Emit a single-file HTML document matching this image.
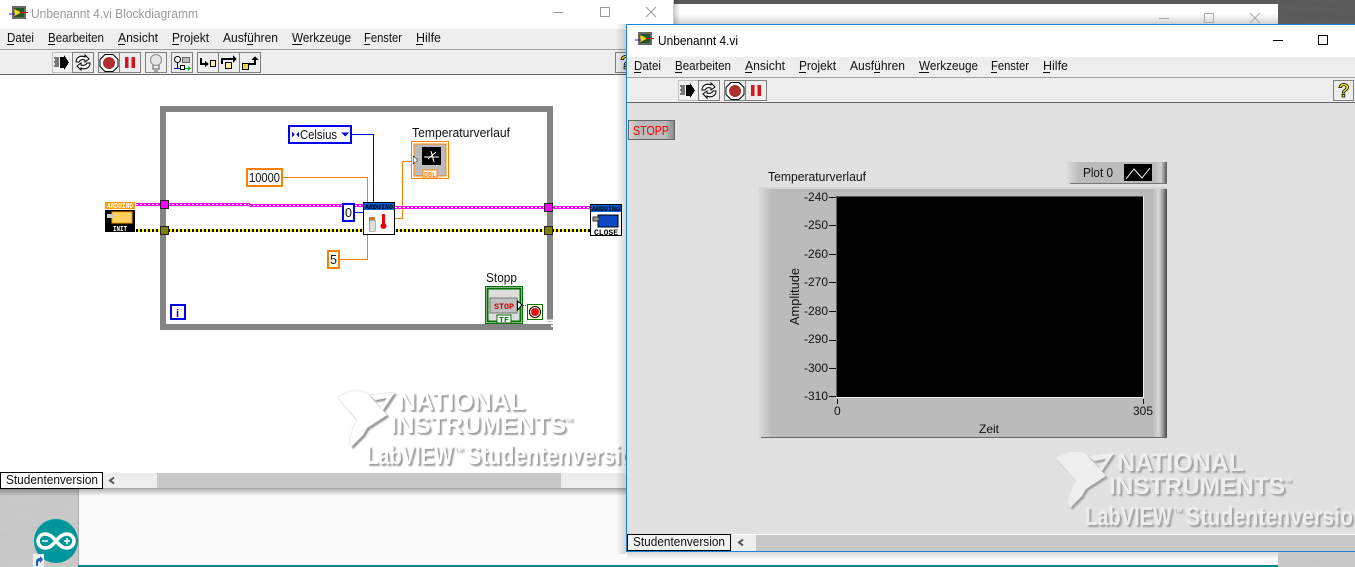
<!DOCTYPE html>
<html><head><meta charset="utf-8"><style>
html,body{margin:0;padding:0;background:#fff;overflow:hidden}
svg{display:block}
text{font-family:"Liberation Sans",sans-serif;font-size:12.5px;fill:#111}
.m{font-size:12.5px}
.wm{font-weight:bold;font-family:"Liberation Sans",sans-serif}
.px{font-family:"Liberation Mono",monospace;font-weight:bold}
</style></head><body>
<svg width="1355" height="567" viewBox="0 0 1355 567" xmlns="http://www.w3.org/2000/svg" shape-rendering="crispEdges">
<defs>
<linearGradient id="behind" x1="0" y1="0" x2="0" y2="1"><stop offset="0" stop-color="#fff"/><stop offset=".5" stop-color="#fff"/><stop offset="1" stop-color="#d2d2d2"/></linearGradient>
<linearGradient id="fr" x1="0" y1="0" x2="1" y2="0"><stop offset="0" stop-color="#dcdcdc"/><stop offset=".03" stop-color="#bbb"/><stop offset=".965" stop-color="#bbb"/><stop offset=".98" stop-color="#d8d8d8"/><stop offset=".99" stop-color="#999"/><stop offset="1" stop-color="#444"/></linearGradient>
<linearGradient id="lg" x1="0" y1="0" x2="1" y2="0"><stop offset="0" stop-color="#dcdcdc"/><stop offset=".12" stop-color="#bbb"/><stop offset=".88" stop-color="#bbb"/><stop offset=".94" stop-color="#d0d0d0"/><stop offset="1" stop-color="#555"/></linearGradient>
<linearGradient id="st" x1="0" y1="0" x2="1" y2="0"><stop offset="0" stop-color="#d8d8d8"/><stop offset=".2" stop-color="#bbb"/><stop offset=".8" stop-color="#bbb"/><stop offset="1" stop-color="#888"/></linearGradient>
<linearGradient id="sh" x1="0" y1="0" x2="0" y2="1"><stop offset="0" stop-color="#000" stop-opacity=".28"/><stop offset="1" stop-color="#000" stop-opacity="0"/></linearGradient>
<linearGradient id="shl" x1="0" y1="0" x2="1" y2="0"><stop offset="0" stop-color="#000" stop-opacity="0"/><stop offset="1" stop-color="#000" stop-opacity=".16"/></linearGradient>
<linearGradient id="shr" x1="0" y1="0" x2="1" y2="0"><stop offset="0" stop-color="#000" stop-opacity=".2"/><stop offset="1" stop-color="#000" stop-opacity="0"/></linearGradient>
<filter id="noise" x="0" y="0" width="100%" height="100%"><feTurbulence type="fractalNoise" baseFrequency=".02 .18" numOctaves="3" seed="4"/><feColorMatrix values="0 0 0 0 .5 0 0 0 0 .5 0 0 0 0 .5 .9 0 0 0 -.25"/></filter>

<g id="run">
 <rect x="52.5" y="52.5" width="20" height="20" fill="#f2f2f2" stroke="#c0c0c0"/>
 <rect x="72.5" y="52.5" width="21" height="20" fill="#eee" stroke="#808080"/>
 <path d="M60 57h4v-2l5 7.500-5 7.500v-2h-4z" fill="#000"/>
 <path d="M54 58h5M55 60h4M54 62h5M55 64h4M54 66h5" stroke="#000" fill="none"/>
 <g fill="#fff" stroke="#000" shape-rendering="auto">
  <path d="M76 62c0-5 5-7 9-5v-2l4 4-4 3v-2c-3-1-5 0-6 2z"/>
  <path d="M90 63c0 5-5 7-9 5v2l-4-4 4-3v2c3 1 5 0 6-2z"/>
 </g>
 <rect x="98.500" y="52.500" width="21" height="20" fill="#eee" stroke="#808080"/>
 <rect x="119.500" y="52.500" width="21" height="20" fill="#eee" stroke="#808080"/>
 <path d="M105 54.500h8l5 5v7l-5 5h-8l-5-5v-7z" fill="#fff" stroke="#000" shape-rendering="auto"/>
 <circle cx="109" cy="63" r="6" fill="#b03030" shape-rendering="auto"/>
 <path d="M125 57h3.500v11h-3.500zM131.500 57h3.500v11h-3.500z" fill="#d9141b"/>
</g>
<g id="help">
 <rect x="0.500" y="0.500" width="20" height="20" fill="#eee" stroke="#808080"/>
 <text x="5" y="17" style="font-size:19px;font-weight:bold;fill:#ffee00;stroke:#000;stroke-width:.8">?</text>
</g>
<g id="vi" shape-rendering="auto">
 <rect x="0" y="0" width="14" height="13" fill="#6a6a6a"/>
 <rect x="2" y="2" width="10" height="9" fill="#1d5a1d"/>
 <path d="M2 2.500l8 4-8 4z" fill="#f0d020" stroke="#333" stroke-width=".5"/>
 <path d="M-3 8h6" stroke="#22c" stroke-width="1"/><path d="M8 6.500h8" stroke="#d00" stroke-width="1"/>
</g>
</defs>

<!-- desktop -->
<rect width="1355" height="567" fill="#c9c9c9"/>
<rect width="1355" height="567" filter="url(#noise)" opacity=".35"/>
<rect x="674" y="0" width="681" height="24" fill="#5a5a5a"/>
<rect x="1278" y="0" width="77" height="24" filter="url(#noise)" opacity=".08"/>

<!-- behind window top and bottom strip -->
<rect x="674" y="4" width="604" height="20" fill="url(#behind)"/>
<path d="M1159 18.500h10" stroke="#aaa"/>
<rect x="1204.500" y="13.500" width="9" height="9" fill="none" stroke="#aaa"/>
<path d="M1250 13l10 10M1260 13l-10 10" stroke="#aaa" fill="none" shape-rendering="auto"/>
<rect x="78" y="489" width="1200" height="76" fill="#fbfbfb"/>
<rect x="78" y="489" width="1" height="76" fill="#aaa"/>
<rect x="78" y="565" width="1200" height="2" fill="#00878f"/>
<rect x="627" y="552" width="651" height="7" fill="url(#sh)" opacity=".5"/>

<!-- arduino desktop icon -->
<g shape-rendering="auto">
 <circle cx="56" cy="541" r="22" fill="#00979c"/>
 <path d="M56 541c-4-5-7-7-11-7a7 7 0 0 0 0 14c4 0 7-2 11-7c4 5 7 7 11 7a7 7 0 0 0 0-14c-4 0-7 2-11 7z" fill="none" stroke="#fff" stroke-width="3.500"/>
 <path d="M42 541h6M64 541h6M67 538v6" stroke="#fff" stroke-width="1.500"/>
 <rect x="33" y="554" width="11" height="13" fill="#eee"/>
 <path d="M36 566v-4c0-3 2-4 4-4v-2l3 3.500-3 3.500v-2c-1 0-2 1-2 2v3z" fill="#1d5fb4"/>
</g>

<!-- back window -->
<rect x="674" y="0" width="6" height="24" fill="url(#shr)"/>
<rect x="0" y="489" width="626" height="7" fill="url(#sh)"/>
<rect x="0" y="0" width="674" height="489" fill="#fff"/>
<rect x="673" y="0" width="1" height="24" fill="#ccc"/>
<g transform="translate(12,6)"><use href="#vi"/></g>
<text x="31" y="18" textLength="167" lengthAdjust="spacingAndGlyphs" style="fill:#9a9a9a;font-size:12.500px">Unbenannt 4.vi Blockdiagramm</text>
<path d="M553 12.500h10" stroke="#9a9a9a"/>
<rect x="600.500" y="7.500" width="9" height="9" fill="none" stroke="#9a9a9a"/>
<path d="M646 7l10 10M656 7l-10 10" stroke="#9a9a9a" fill="none" shape-rendering="auto"/>
<rect x="0" y="29" width="674" height="20" fill="#eee"/>
<rect x="0" y="49" width="674" height="1" fill="#a0a0a0"/>
<rect x="0" y="50" width="674" height="24" fill="#eee"/>
<rect x="0" y="74" width="674" height="1" fill="#666"/>
<text class="m" x="7" y="42" textLength="27" lengthAdjust="spacingAndGlyphs">Datei</text>
<text class="m" x="48" y="42" textLength="56" lengthAdjust="spacingAndGlyphs">Bearbeiten</text>
<text class="m" x="118" y="42" textLength="40" lengthAdjust="spacingAndGlyphs">Ansicht</text>
<text class="m" x="172" y="42" textLength="37" lengthAdjust="spacingAndGlyphs">Projekt</text>
<text class="m" x="223" y="42" textLength="55" lengthAdjust="spacingAndGlyphs">Ausführen</text>
<text class="m" x="292" y="42" textLength="59" lengthAdjust="spacingAndGlyphs">Werkzeuge</text>
<text class="m" x="364" y="42" textLength="38" lengthAdjust="spacingAndGlyphs">Fenster</text>
<text class="m" x="416" y="42" textLength="25" lengthAdjust="spacingAndGlyphs">Hilfe</text>
<path d="M7 44.500h7M48 44.500h7M118 44.500h7M172 44.500h7M247 44.500h6M292 44.500h10M364 44.500h6M416 44.500h7" stroke="#111"/>
<use href="#run"/>
<rect x="145.500" y="52.500" width="21" height="20" fill="#eee" stroke="#808080"/>
<g shape-rendering="auto" fill="none" stroke="#888">
 <circle cx="156" cy="60" r="5.500" fill="#e6e6e6"/><path d="M153 65v4h6v-4M154 71h4" stroke-width="1.500"/>
</g>
<rect x="171.500" y="52.500" width="21" height="20" fill="#eee" stroke="#808080"/>
<g shape-rendering="auto">
 <circle cx="177.500" cy="59.500" r="3" fill="#fff" stroke="#000"/>
 <rect x="182.500" y="57.500" width="7" height="5" fill="#bbb" stroke="#666"/>
 <path d="M177.500 63v5" stroke="#000"/><path d="M174 68.500h8" stroke="#00c"/>
 <rect x="180.500" y="65.500" width="4" height="4" fill="#fff" stroke="#000"/>
 <path d="M185 68h3v-2l3 2.500-3 2.500v-2h-3z" fill="#0b0"/>
</g>
<rect x="197.500" y="52.500" width="21" height="20" fill="#eee" stroke="#808080"/>
<rect x="218.500" y="52.500" width="21" height="20" fill="#eee" stroke="#808080"/>
<rect x="239.500" y="52.500" width="21" height="20" fill="#eee" stroke="#808080"/>
<path d="M201 58v6h5" fill="none" stroke="#000" stroke-width="2"/><path d="M205 61l4 3-4 3z"/>
<rect x="210.500" y="60.500" width="5" height="6" fill="#ffef9a" stroke="#000"/>
<path d="M222 64v-5h12" fill="none" stroke="#000" stroke-width="2"/><path d="M233 55.500l4 3.500-4 3.500z"/>
<rect x="225.500" y="62.500" width="6" height="6" fill="#ffef9a" stroke="#000"/>
<rect x="242.500" y="63.500" width="6" height="6" fill="#e6d84a" stroke="#000"/>
<path d="M249 64h6v-5" fill="none" stroke="#000" stroke-width="2"/><path d="M251.500 60l3.500-4 3.500 4z"/>
<g transform="translate(615,52)"><use href="#help"/></g>

<!-- block diagram: loop and wires -->
<rect x="160" y="106" width="393" height="6" fill="#848484"/>
<rect x="160" y="106" width="6" height="224" fill="#848484"/>
<rect x="547" y="106" width="6" height="216" fill="#848484"/>
<rect x="160" y="324" width="393" height="6" fill="#848484"/>
<path d="M547 320.500h6M551 326h2" stroke="#fff" stroke-width="2"/>

<path d="M352 134.500h21.500V203" fill="none" stroke="#0000ee"/>
<path d="M355 212.500h9" stroke="#0000ee"/>
<rect x="283" y="177" width="85" height="1" fill="#ff8000"/>
<rect x="367" y="177" width="1" height="26" fill="#ff8000"/>
<rect x="340" y="259" width="28" height="1" fill="#ff8000"/>
<rect x="367" y="235" width="1" height="25" fill="#ff8000"/>
<path d="M395 218.500h7.500V161.500H412" fill="none" stroke="#ff8000"/>

<g fill="none">
 <path d="M136 204.500H250" stroke="#ff00ff" stroke-width="3"/>
 <path d="M136 204.500H250" stroke="#fff" stroke-dasharray="2 2"/>
 <path d="M249 205.500H342M355 205.500H364" stroke="#ff00ff" stroke-width="3"/>
 <path d="M249 205.500H342M355 205.500H364" stroke="#fff" stroke-dasharray="2 2"/>
 <path d="M395 207.500H590" stroke="#ff00ff" stroke-width="3"/>
 <path d="M395 207.500H590" stroke="#fff" stroke-dasharray="2 2"/>
 <path d="M136 230.500H590" stroke="#ffff00" stroke-width="3"/>
 <path d="M136 230.500H590" stroke="#000" stroke-width="3" stroke-dasharray="2 2"/>
</g>
<rect x="160.500" y="200.500" width="8" height="8" fill="#ff00ff" stroke="#222"/>
<rect x="160.500" y="226.500" width="8" height="8" fill="#808000" stroke="#222"/>
<rect x="544.500" y="203.500" width="8" height="8" fill="#ff00ff" stroke="#222"/>
<rect x="544.500" y="226.500" width="8" height="8" fill="#808000" stroke="#222"/>

<!-- init -->
<rect x="105" y="202" width="30" height="7" fill="#ff9d00"/>
<text class="px" x="107" y="208" textLength="26" lengthAdjust="spacingAndGlyphs" style="font-size:7px;fill:#fff">ARDUINO</text>
<rect x="105" y="210" width="30" height="22" fill="#000"/>
<rect x="112" y="212" width="20" height="11" fill="#ffd060" stroke="#ff9d00"/>
<rect x="107" y="214" width="7" height="4" fill="#ccc"/>
<text class="px" x="113" y="231" textLength="14" lengthAdjust="spacingAndGlyphs" style="font-size:7.500px;fill:#fff">INIT</text>

<!-- temp node -->
<rect x="363.500" y="202.500" width="31" height="32" fill="#fff" stroke="#000"/>
<rect x="364" y="203" width="30" height="7" fill="#0060d8"/>
<text class="px" x="365" y="209" textLength="28" lengthAdjust="spacingAndGlyphs" style="font-size:6.500px;fill:#000">ARDUINO</text>
<rect x="369" y="220" width="6" height="11" fill="#ddd" stroke="#666" stroke-width=".5"/>
<rect x="369" y="217" width="6" height="3" fill="#c87830"/>
<rect x="382" y="214" width="3" height="11" fill="#e00"/>
<circle cx="383.500" cy="226" r="3" fill="#e00" shape-rendering="auto"/>

<!-- close -->
<rect x="590.500" y="204.500" width="31" height="31" fill="#fff" stroke="#000"/>
<rect x="591" y="205" width="30" height="7" fill="#0060d8"/>
<text class="px" x="592" y="211" textLength="28" lengthAdjust="spacingAndGlyphs" style="font-size:6.500px;fill:#000">ARDUINO</text>
<rect x="598" y="215" width="20" height="12" fill="#0a48c8" stroke="#000"/>
<rect x="593" y="217" width="6" height="4" fill="#999" stroke="#333"/>
<text class="px" x="594" y="235" textLength="24" lengthAdjust="spacingAndGlyphs" style="font-size:8px;fill:#000">CLOSE</text>

<!-- constants -->
<rect x="289" y="126" width="62" height="17" fill="#fff" stroke="#0000ee" stroke-width="2"/>
<path d="M295 134.500l-3-2.500v5zM296 134.500l3-2.500v5z" fill="#0000ee"/>
<text x="300" y="139" textLength="37" lengthAdjust="spacingAndGlyphs">Celsius</text>
<path d="M341 132.500h8l-4 4z" fill="#0000ee"/>
<rect x="247" y="169" width="35" height="17" fill="#fff" stroke="#ff8000" stroke-width="2"/>
<text x="249" y="182" textLength="31" lengthAdjust="spacingAndGlyphs">10000</text>
<rect x="343" y="204" width="11" height="17" fill="#fff" stroke="#0000ee" stroke-width="2"/>
<text x="345" y="217">0</text>
<rect x="328" y="251" width="11" height="17" fill="#fff" stroke="#ff8000" stroke-width="2"/>
<text x="330" y="264">5</text>
<rect x="171" y="305" width="14" height="14" fill="#fff" stroke="#0000ee" stroke-width="2"/>
<text x="176" y="317" style="fill:#0000ee;font-size:11px;font-weight:bold">i</text>

<!-- graph terminal -->
<text x="412" y="137" textLength="98" lengthAdjust="spacingAndGlyphs">Temperaturverlauf</text>
<rect x="411.500" y="141.500" width="37" height="37" fill="#fff" stroke="#ff8000"/>
<rect x="414" y="144" width="32" height="32" fill="#bbb" stroke="#ff8000"/>
<rect x="422" y="147" width="19" height="18" fill="#000"/>
<path d="M424 157h15M431 151l3 11M428 159l8-7" stroke="#fff" fill="none"/>
<path d="M413 156l5 4-5 4z" fill="#fff" stroke="#000" stroke-width=".5"/>
<rect x="423" y="170" width="14" height="8" fill="#fff" stroke="#ff8000"/>
<text class="px" x="424" y="177" textLength="12" lengthAdjust="spacingAndGlyphs" style="font-size:7px;fill:#ff8000">DBL</text>

<!-- stop -->
<text x="486" y="282" textLength="31" lengthAdjust="spacingAndGlyphs">Stopp</text>
<rect x="485.500" y="286.500" width="37" height="37" fill="#fff" stroke="#007000"/>
<rect x="487.500" y="288.500" width="33" height="33" fill="#ddd" stroke="#007000" stroke-width="2"/>
<rect x="490" y="298" width="27" height="15" fill="#c0c0c0" stroke="#777"/>
<text class="px" x="494" y="309" textLength="20" lengthAdjust="spacingAndGlyphs" style="font-size:8.500px;fill:#d00000">STOP</text>
<path d="M517.500 301l4.500 4-4.500 5z" fill="#fff" stroke="#000"/>
<rect x="497" y="315" width="14" height="8" fill="#fff" stroke="#007000"/>
<text class="px" x="499" y="322" textLength="10" lengthAdjust="spacingAndGlyphs" style="font-size:7.500px;fill:#007000">TF</text>
<path d="M523 305.500h5" stroke="#007000" stroke-dasharray="1 1"/>
<rect x="527.500" y="304.500" width="15" height="15" fill="#ffffd8" stroke="#007000"/>
<circle cx="535" cy="312" r="5.500" fill="#fff" stroke="#000" shape-rendering="auto"/>
<circle cx="535" cy="312" r="4" fill="#e81010" shape-rendering="auto"/>

<!-- back watermark -->
<g shape-rendering="auto" style="filter:drop-shadow(2px 2px .8px #9c9c9c)" fill="#fff">
 <path d="M337 397L350 391Q360 390 367 393L387 415L367 428L363 435L351 447Q348 440 350 437Q352 428 357 420Z" stroke="#ddd" stroke-width=".5"/>
 <path d="M370 395L395 392L383 410L380 408L387 398L375 400Z" stroke="#ddd" stroke-width=".5"/>
 <text class="wm" x="398" y="410" textLength="127" lengthAdjust="spacingAndGlyphs" style="font-size:25px;fill:#fff">NATIONAL</text>
 <text class="wm" x="390" y="433" textLength="176" lengthAdjust="spacingAndGlyphs" style="font-size:24px;fill:#fff">INSTRUMENTS</text>
 <text class="wm" x="565" y="421" style="font-size:5px;fill:#fff">TM</text>
 <text class="wm" x="366" y="464" textLength="87" lengthAdjust="spacingAndGlyphs" style="font-size:26px;fill:#fff">LabVIEW</text>
 <text class="wm" x="454" y="451" style="font-size:6px;fill:#fff">TM</text>
 <text class="wm" x="467" y="464" textLength="180" lengthAdjust="spacingAndGlyphs" style="font-size:26px;fill:#fff">Studentenversion</text>
</g>

<!-- back scroll -->
<rect x="0" y="473" width="674" height="15" fill="#eee"/>
<rect x="157" y="473" width="404" height="15" fill="#c8c8c8"/>
<rect x="0" y="488" width="674" height="1" fill="#aaa"/>
<rect x="0.500" y="472.500" width="102" height="16" fill="#fff" stroke="#000"/>
<text x="6" y="484" textLength="92" lengthAdjust="spacingAndGlyphs">Studentenversion</text>
<path d="M114 477.500l-4 3 4 3" fill="none" stroke="#555" stroke-width="2" shape-rendering="auto"/>

<!-- front window -->
<rect x="616" y="24" width="10" height="530" fill="url(#shl)"/>
<rect x="626" y="24" width="729" height="528" fill="#1883d7"/>
<rect x="627" y="25" width="728" height="32" fill="#fff"/>
<g transform="translate(638,32)"><use href="#vi"/></g>
<text x="658" y="45" textLength="80" lengthAdjust="spacingAndGlyphs" style="fill:#000">Unbenannt 4.vi</text>
<path d="M1273 40.500h10" stroke="#000"/>
<rect x="1318.500" y="35.500" width="9" height="9" fill="none" stroke="#000"/>
<rect x="627" y="57" width="728" height="20" fill="#eee"/>
<rect x="627" y="77" width="728" height="1" fill="#a0a0a0"/>
<rect x="627" y="78" width="728" height="24" fill="#eee"/>
<rect x="627" y="102" width="728" height="1" fill="#666"/>
<rect x="627" y="103" width="728" height="431" fill="#e1e1e1"/>
<text class="m" x="634" y="70" textLength="27" lengthAdjust="spacingAndGlyphs">Datei</text>
<text class="m" x="675" y="70" textLength="56" lengthAdjust="spacingAndGlyphs">Bearbeiten</text>
<text class="m" x="745" y="70" textLength="40" lengthAdjust="spacingAndGlyphs">Ansicht</text>
<text class="m" x="799" y="70" textLength="37" lengthAdjust="spacingAndGlyphs">Projekt</text>
<text class="m" x="850" y="70" textLength="55" lengthAdjust="spacingAndGlyphs">Ausführen</text>
<text class="m" x="919" y="70" textLength="59" lengthAdjust="spacingAndGlyphs">Werkzeuge</text>
<text class="m" x="991" y="70" textLength="38" lengthAdjust="spacingAndGlyphs">Fenster</text>
<text class="m" x="1043" y="70" textLength="25" lengthAdjust="spacingAndGlyphs">Hilfe</text>
<path d="M634 72.500h7M675 72.500h7M745 72.500h7M799 72.500h7M874 72.500h6M919 72.500h10M991 72.500h6M1043 72.500h7" stroke="#111"/>
<g transform="translate(626,28)"><use href="#run"/></g>
<g transform="translate(1333,80)"><use href="#help"/></g>

<!-- stop button -->
<rect x="628.500" y="120.500" width="46" height="19" fill="url(#st)" stroke="#666"/>
<text x="633" y="135" textLength="36" lengthAdjust="spacingAndGlyphs" style="fill:#ff0000">STOPP</text>

<!-- chart -->
<text x="768" y="181" textLength="98" lengthAdjust="spacingAndGlyphs">Temperaturverlauf</text>
<rect x="1067" y="162" width="100" height="22" fill="url(#lg)"/>
<rect x="1070" y="183" width="97" height="1" fill="#777"/>
<text x="1083" y="177" textLength="30" lengthAdjust="spacingAndGlyphs">Plot 0</text>
<rect x="1124" y="164" width="28" height="17" fill="#000"/>
<path d="M1126 179l8-10 8 9 8-10" fill="none" stroke="#fff" shape-rendering="auto"/>
<rect x="759" y="187" width="408" height="251" fill="url(#fr)"/>
<rect x="759" y="187" width="408" height="2" fill="#d4d4d4"/>
<rect x="761" y="437" width="406" height="1" fill="#666"/>
<rect x="836" y="196" width="307" height="201" fill="#000"/>
<rect x="836" y="196" width="307" height="1" fill="#555"/>
<rect x="836" y="197" width="1" height="200" fill="#666"/>
<rect x="836" y="397" width="308" height="1" fill="#eee"/>
<rect x="1143" y="196" width="1" height="202" fill="#eee"/>
<path d="M829 197.500h7M829 225.500h7M829 254.500h7M829 282.500h7M829 311.500h7M829 340.500h7M829 368.500h7M829 396.500h7M837.500 399v5M1143.500 399v5" stroke="#111"/>
<text x="828" y="201" style="font-size:12px" text-anchor="end">-240</text>
<text x="828" y="229" style="font-size:12px" text-anchor="end">-250</text>
<text x="828" y="258" style="font-size:12px" text-anchor="end">-260</text>
<text x="828" y="286" style="font-size:12px" text-anchor="end">-270</text>
<text x="828" y="315" style="font-size:12px" text-anchor="end">-280</text>
<text x="828" y="343" style="font-size:12px" text-anchor="end">-290</text>
<text x="828" y="372" style="font-size:12px" text-anchor="end">-300</text>
<text x="828" y="400" style="font-size:12px" text-anchor="end">-310</text>
<text x="834" y="415" style="font-size:12px">0</text>
<text x="1133" y="415" style="font-size:12px">305</text>
<text x="979" y="433" style="font-size:12px">Zeit</text>
<text transform="translate(799,325) rotate(-90)" textLength="57" lengthAdjust="spacingAndGlyphs" style="font-size:12.500px">Amplitude</text>

<!-- front watermark -->
<g shape-rendering="auto" style="filter:drop-shadow(2px 2px .8px #a0a0a0)" fill="#eee" transform="translate(719,61)">
 <path d="M337 397L350 391Q360 390 367 393L387 415L367 428L363 435L351 447Q348 440 350 437Q352 428 357 420Z"/>
 <path d="M370 395L395 392L383 410L380 408L387 398L375 400Z"/>
 <text class="wm" x="398" y="410" textLength="127" lengthAdjust="spacingAndGlyphs" style="font-size:25px;fill:#eee">NATIONAL</text>
 <text class="wm" x="390" y="433" textLength="176" lengthAdjust="spacingAndGlyphs" style="font-size:24px;fill:#eee">INSTRUMENTS</text>
 <text class="wm" x="565" y="421" style="font-size:5px;fill:#eee">TM</text>
 <text class="wm" x="366" y="464" textLength="87" lengthAdjust="spacingAndGlyphs" style="font-size:26px;fill:#eee">LabVIEW</text>
 <text class="wm" x="454" y="451" style="font-size:6px;fill:#eee">TM</text>
 <text class="wm" x="467" y="464" textLength="180" lengthAdjust="spacingAndGlyphs" style="font-size:26px;fill:#eee">Studentenversion</text>
</g>

<!-- front scroll -->
<rect x="627" y="534" width="728" height="1" fill="#fff"/>
<rect x="627" y="535" width="728" height="16" fill="#eee"/>
<rect x="756" y="535" width="599" height="16" fill="#c8c8c8"/>
<rect x="627.500" y="534.500" width="103" height="16" fill="#f4f4f4" stroke="#000"/>
<text x="633" y="546" textLength="92" lengthAdjust="spacingAndGlyphs">Studentenversion</text>
<path d="M743 539.500l-4 3 4 3" fill="none" stroke="#555" stroke-width="2" shape-rendering="auto"/>
</svg>
</body></html>
